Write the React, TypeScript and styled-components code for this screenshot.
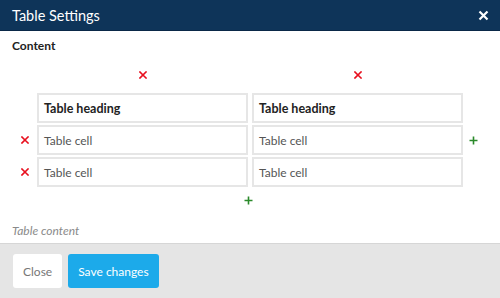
import React from "react";
import styled, { createGlobalStyle } from "styled-components";

const Global = createGlobalStyle`
  html, body { margin: 0; padding: 0; background: #ffffff; }
  body { font-family: "Lato", "Open Sans", "Liberation Sans", sans-serif; }
  * { box-sizing: border-box; }
`;

const Modal = styled.div`
  width: 500px;
  height: 298px;
  display: flex;
  flex-direction: column;
  background: #fff;
`;

const Header = styled.div`
  height: 31px;
  flex: none;
  background: #0e3459;
  border-bottom: 1px solid #0a2847;
  display: flex;
  align-items: center;
  justify-content: space-between;
  padding: 0 11px 0 12px;
  color: #fff;
`;

const Title = styled.h1`
  margin: 0;
  font-size: 14.5px;
  font-weight: 400;
`;

const CloseIcon = styled.button`
  border: 0;
  background: none;
  padding: 0;
  width: 11px;
  height: 11px;
  display: flex;
  align-items: center;
  justify-content: center;
  color: #fff;
  cursor: pointer;
`;

const Body = styled.div`
  flex: 1;
  padding: 7px 12px 0 12px;
  display: flex;
  flex-direction: column;
`;

const Label = styled.div`
  font-size: 12px;
  font-weight: 700;
  color: #222;
  line-height: 16px;
`;

const Grid = styled.div`
  margin-top: 11px;
  display: grid;
  grid-template-columns: 25px 211px 211px 28px;
  row-gap: 0;
  align-items: center;
`;

const ColGrid = styled.div`
  display: grid;
  grid-column: 2 / 4;
  grid-template-columns: 211px 211px;
  column-gap: 4px;
`;

const IconCell = styled.div<{ $h?: number }>`
  display: flex;
  align-items: center;
  justify-content: center;
  height: ${(p) => p.$h ?? 20}px;
`;

const Cell = styled.div<{ $heading?: boolean }>`
  height: 30px;
  border: 2px solid #e6e6e6;
  display: flex;
  align-items: center;
  padding: 0 5px;
  font-size: ${(p) => (p.$heading ? 12.5 : 12)}px;
  font-weight: ${(p) => (p.$heading ? 700 : 400)};
  color: ${(p) => (p.$heading ? "#222" : "#555")};
`;

const Rows = styled.div`
  grid-column: 1 / 5;
  display: grid;
  grid-template-columns: 25px 211px 211px 28px;
  row-gap: 2px;
  align-items: center;
  margin-top: 8px;
`;

const RowCells = styled.div`
  grid-column: 2 / 4;
  display: grid;
  grid-template-columns: 211px 211px;
  column-gap: 4px;
`;

const AddRowWrap = styled.div`
  grid-column: 2 / 4;
  display: flex;
  justify-content: center;
  padding-top: 7px;
  height: 16px;
`;

const Hint = styled.div`
  margin-top: 18px;
  font-size: 12px;
  line-height: 15px;
  font-style: italic;
  color: #8a8a8a;
`;

const Footer = styled.div`
  height: 55px;
  flex: none;
  background: #e5e5e5;
  border-top: 1px solid #d6d6d6;
  display: flex;
  align-items: flex-start;
  gap: 6px;
  padding: 10px 13px 0 13px;
`;

const Button = styled.button<{ $primary?: boolean }>`
  height: 34px;
  border: 0;
  border-radius: 3px;
  padding: 0 10px;
  font-family: "Lato", "Open Sans", "Liberation Sans", sans-serif;
  font-size: 12px;
  background: ${(p) => (p.$primary ? "#1caaea" : "#ffffff")};
  color: ${(p) => (p.$primary ? "#ffffff" : "#777")};
  cursor: pointer;
`;

const Cross = ({ color = "#e8101f", size = 8, w = 1.6 }: { color?: string; size?: number; w?: number }) => (
  <svg width={size} height={size} viewBox="0 0 8 8">
    <path d="M1 1 L7 7 M7 1 L1 7" stroke={color} strokeWidth={w} strokeLinecap="square" />
  </svg>
);

const Plus = () => (
  <svg width="9" height="9" viewBox="0 0 9 9">
    <path d="M4.5 0.5 V8.5 M0.5 4.5 H8.5" stroke="#2b8a2b" strokeWidth="1.6" />
  </svg>
);

export default function App() {
  const rows = [
    ["Table cell", "Table cell"],
    ["Table cell", "Table cell"],
  ];
  return (
    <>
      <Global />
      <Modal>
        <Header>
          <Title>Table Settings</Title>
          <CloseIcon aria-label="close">
            <svg width="11" height="11" viewBox="0 0 11 11">
              <path d="M1.5 1.5 L9.5 9.5 M9.5 1.5 L1.5 9.5" stroke="#fff" strokeWidth="2.2" />
            </svg>
          </CloseIcon>
        </Header>
        <Body>
          <Label>Content</Label>
          <Grid>
            <div />
            <ColGrid>
              <IconCell>
                <Cross />
              </IconCell>
              <IconCell>
                <Cross />
              </IconCell>
            </ColGrid>
            <div />
            <Rows>
              <div />
              <RowCells>
                <Cell $heading>Table heading</Cell>
                <Cell $heading>Table heading</Cell>
              </RowCells>
              <div />
              {rows.map((r, i) => (
                <React.Fragment key={i}>
                  <IconCell $h={30}>
                    <Cross />
                  </IconCell>
                  <RowCells>
                    {r.map((c, j) => (
                      <Cell key={j}>{c}</Cell>
                    ))}
                  </RowCells>
                  <IconCell $h={30}>{i === 0 ? <Plus /> : null}</IconCell>
                </React.Fragment>
              ))}
              <div />
              <AddRowWrap>
                <Plus />
              </AddRowWrap>
              <div />
            </Rows>
          </Grid>
          <Hint>Table content</Hint>
        </Body>
        <Footer>
          <Button>Close</Button>
          <Button $primary>Save changes</Button>
        </Footer>
      </Modal>
    </>
  );
}
